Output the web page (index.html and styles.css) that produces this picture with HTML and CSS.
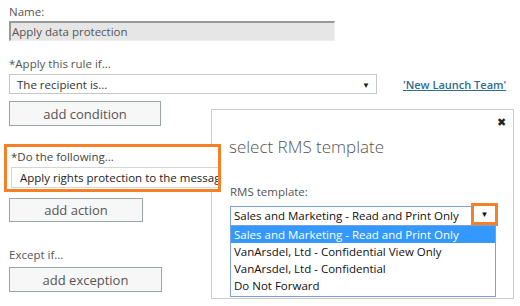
FILE: index.html
```html
<!DOCTYPE html>
<html lang="en">
<head>
    <meta charset="UTF-8">
    <title>New rule</title>
    <link rel="stylesheet" href="styles.css">
</head>
<body>
<div class="rule-form">
    <div class="field-label">Name:</div>
    <div class="name-input">Apply data protection</div>

    <div class="field-label rule-label">*Apply this rule if...</div>
    <div class="rule-row">
        <div class="select-box">
            <span>The recipient is...</span>
            <span class="arrow">&#9660;</span>
        </div>
        <a class="team-link" href="#">'New Launch Team'</a>
    </div>
    <button class="btn btn-condition">add condition</button>

    <div class="highlight">
        <div class="field-label">*Do the following...</div>
        <div class="action-input">Apply rights protection to the message with...</div>
    </div>
    <button class="btn btn-action">add action</button>

    <div class="field-label except-label">Except if...</div>
    <button class="btn btn-exception">add exception</button>
</div>

<div class="dialog">
    <div class="close">&#10006;</div>
    <div class="dialog-title">select RMS template</div>
    <div class="field-label dialog-label">RMS template:</div>
    <div class="template-select">
        <span>Sales and Marketing - Read and Print Only</span>
        <span class="arrow-mark">&#9660;</span>
    </div>
    <ul class="template-list">
        <li class="selected">Sales and Marketing - Read and Print Only</li>
        <li>VanArsdel, Ltd - Confidential View Only</li>
        <li>VanArsdel, Ltd - Confidential</li>
        <li>Do Not Forward</li>
    </ul>
</div>
</body>
</html>
```

FILE: styles.css
```css
body {
    margin: 0;
    width: 520px;
    height: 306px;
    overflow: hidden;
    background: #ffffff;
    font-family: "Open Sans", "Noto Sans", sans-serif;
    font-size: 11.5px;
    color: #333333;
    position: relative;
}

.rule-form {
    display: flex;
    flex-direction: column;
    align-items: flex-start;
    padding: 4px 0 0 9px;
}

.field-label {
    color: #555555;
    line-height: 16px;
    height: 16px;
}

.name-input {
    margin-top: 1px;
    width: 322px;
    height: 17px;
    line-height: 17px;
    padding-left: 1px;
    background: #e6e6e6;
    border-top: 2px solid #999999;
    border-left: 2px solid #999999;
    border-right: 1px solid #eeeeee;
    border-bottom: 1px solid #eeeeee;
    color: #555555;
}

.rule-label {
    margin-top: 15px;
}

.rule-row {
    display: flex;
    align-items: center;
    margin-top: 2px;
}

.select-box {
    width: 353px;
    height: 18px;
    border: 1px solid #c6c6c6;
    display: flex;
    justify-content: space-between;
    align-items: center;
    padding: 0 6px 0 7px;
}

.arrow {
    font-size: 8px;
    color: #222222;
}

.team-link {
    margin-left: 26px;
    color: #2e6d8e;
    font-weight: 600;
    font-size: 11px;
}

.btn {
    font-family: inherit;
    font-size: 13px;
    color: #555555;
    background: #f7f7f7;
    border: 1px solid #9aa5a8;
    height: 25px;
    padding: 0;
}

.btn-condition {
    margin-top: 7px;
    width: 152px;
}

.highlight {
    margin: 18px 0 0 -5px;
    width: 207px;
    height: 40px;
    padding: 2px 0 0 4px;
    border: 3px solid #f58025;
    overflow: hidden;
    position: relative;
    z-index: 2;
    background: #ffffff;
}

.highlight .field-label {
    color: #444444;
}

.action-input {
    margin-top: 2px;
    width: 212px;
    height: 19px;
    line-height: 19px;
    border: 1px solid #d6d6d6;
    padding-left: 8px;
    white-space: nowrap;
    overflow: hidden;
    color: #222222;
}

.btn-action {
    margin-top: 6px;
    width: 134px;
    height: 24px;
}

.except-label {
    margin-top: 25px;
}

.btn-exception {
    margin-top: 4px;
    width: 153px;
}

.dialog {
    position: absolute;
    left: 211px;
    top: 109px;
    width: 301px;
    height: 188px;
    border: 1px solid #cccccc;
    background: #ffffff;
    z-index: 1;
}

.close {
    position: absolute;
    right: 7px;
    top: 4px;
    font-size: 11px;
    color: #222222;
}

.dialog-title {
    margin: 26px 0 0 17px;
    font-size: 17px;
    font-weight: 300;
    color: #555555;
    line-height: 22px;
}

.dialog-label {
    margin: 26px 0 0 18px;
}

.template-select {
    position: relative;
    margin: 6px 0 0 18px;
    width: 263px;
    height: 18px;
    border: 1px solid #7e9ed6;
    padding-left: 3px;
    line-height: 18px;
    color: #111111;
}

.arrow-mark {
    position: absolute;
    right: -1px;
    top: -4px;
    width: 21px;
    height: 16px;
    border: 3px solid #f58025;
    font-size: 8px;
    text-align: center;
    line-height: 16px;
    color: #111111;
    background: #ffffff;
}

.template-list {
    list-style: none;
    margin: 0 0 0 18px;
    padding: 0 0 2px;
    width: 264px;
    border: 1px solid #7e9ed6;
    border-top: none;
}

.template-list li {
    height: 17px;
    line-height: 17px;
    padding-left: 3px;
    color: #111111;
}

.template-list li.selected {
    background: #3399ff;
    color: #ffffff;
}
```
